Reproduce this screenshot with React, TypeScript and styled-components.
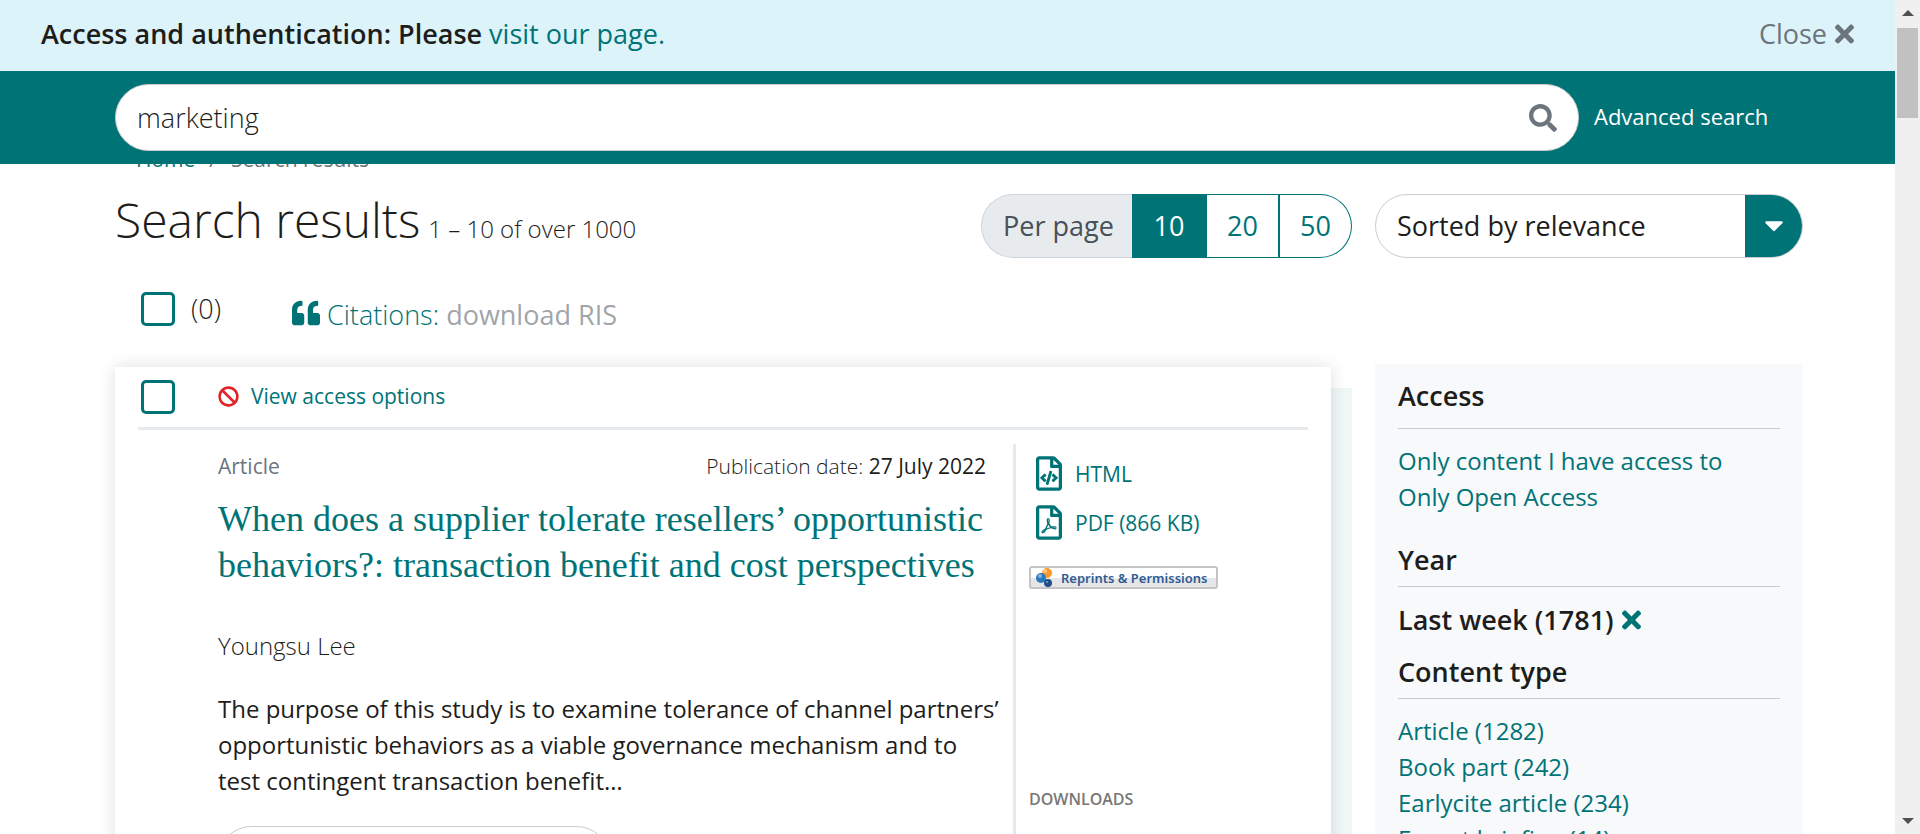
import React from "react";
import styled, { createGlobalStyle, css } from "styled-components";
import {
  FaBan,
  FaCaretDown,
  FaQuoteLeft,
  FaRegFileCode,
  FaRegFilePdf,
  FaSearch,
  FaTimes,
} from "react-icons/fa";

const teal = "#007377";
const ink = "#1d1d1b";
const muted = "#6c757d";
const line = "#e7eaed";

const GlobalStyle = createGlobalStyle`
  * { box-sizing: border-box; }
  body {
    margin: 0;
    background: #fff;
    color: ${ink};
    font: 400 24px/36px "Open Sans", sans-serif;
  }
  h1, h2, h3, p, ul { margin: 0; padding: 0; font-weight: 400; }
  ul { list-style: none; }
  a { color: ${teal}; text-decoration: none; }
  button, input, select { font: inherit; color: inherit; margin: 0; padding: 0; border: 0; background: none; }
  svg { display: block; flex: none; }
`;

const Window = styled.div`
  display: flex;
  height: 100vh;
  overflow: hidden;
`;

const Page = styled.div`
  flex: 1;
  min-width: 0;
`;

const Notice = styled.div`
  display: flex;
  align-items: center;
  justify-content: space-between;
  height: 71px;
  padding: 0 41px 3px;
  background: #dcf3f9;
  font-size: 27px;
`;

const NoticeText = styled.p`
  font-weight: 600;
  a { font-weight: 400; }
`;

const CloseButton = styled.button`
  display: flex;
  align-items: center;
  gap: 8px;
  color: ${muted};
`;

const CrossIcon = styled(FaTimes)`
  width: 19px;
  height: 28px;
`;

const SearchHeader = styled.header`
  display: flex;
  align-items: center;
  gap: 15px;
  height: 93px;
  padding: 0 93px 0 115px;
  background: ${teal};
`;

const SearchForm = styled.form`
  display: flex;
  flex: 1;
  height: 67px;
  padding: 0 21px;
  border: 1px solid #ccc;
  border-radius: 34px;
  background: #fff;
`;

const SearchInput = styled.input`
  flex: 1;
  min-width: 0;
  outline: 0;
  font-size: 27px;
  font-weight: 300;
`;

const SearchButton = styled.button`
  color: ${muted};
  font-size: 28px;
`;

const AdvancedLink = styled.a`
  flex: 0 0 208px;
  padding-bottom: 3px;
  color: #fff;
  font-size: 22px;
`;

const Content = styled.main`
  padding: 0 92px 0 115px;
`;

const Breadcrumb = styled.nav`
  display: flex;
  align-items: flex-end;
  gap: 14px;
  height: 9px;
  padding-left: 21px;
  overflow: hidden;
  color: ${muted};
  font-size: 21px;
  line-height: 28px;
`;

const TitleRow = styled.div`
  display: flex;
  align-items: flex-start;
  padding-top: 21px;
`;

const PageTitle = styled.h1`
  flex: 1;
  font-size: 48px;
  font-weight: 300;
  line-height: 52px;
  small { font-size: 24px; margin-left: 8px; }
`;

const PerPage = styled.div`
  display: flex;
  height: 64px;
  margin-right: 23px;
  font-size: 27px;
`;

const PerPageLabel = styled.span`
  display: flex;
  align-items: center;
  width: 151px;
  padding-left: 21px;
  border: 1px solid #ced4da;
  border-right: 0;
  border-radius: 32px 0 0 32px;
  background: #e7ebee;
  color: #495057;
`;

const PerPageOption = styled.button<{ $active?: boolean }>`
  width: 74px;
  margin-right: -1px;
  border: 1px solid ${teal};
  color: ${teal};
  & + & { border-left-width: 2px; }
  &:last-child { margin-right: 0; border-radius: 0 32px 32px 0; }
  ${(p) => p.$active && css`background: ${teal}; color: #fff;`}
`;

const SortBox = styled.div`
  display: flex;
  flex: 0 0 428px;
  height: 64px;
  border: 1px solid #ccc;
  border-radius: 32px;
  overflow: hidden;
  font-size: 27px;
`;

const SortSelect = styled.select`
  flex: 1;
  appearance: none;
  padding-left: 21px;
  outline: 0;
`;

const SortArrow = styled.span`
  display: flex;
  align-items: center;
  justify-content: center;
  width: 57px;
  padding-bottom: 2px;
  background: ${teal};
  color: #fff;
  pointer-events: none;
  font-size: 30px;
`;

const SelectRow = styled.div`
  display: flex;
  align-items: flex-start;
  margin-top: 34px;
  padding-left: 26px;
  font-size: 27px;
`;

const Checkbox = styled.input`
  appearance: none;
  flex: none;
  width: 34px;
  height: 34px;
  border: 3px solid ${teal};
  border-radius: 5px;
  background: #fff;
`;

const SelectAll = styled.label`
  display: flex;
  align-items: center;
  gap: 16px;
  width: 151px;
  font-weight: 300;
  line-height: 34px;
`;

const Citations = styled.p`
  display: flex;
  align-items: center;
  gap: 7px;
  color: ${teal};
  font-weight: 300;
  line-height: 46px;
  button { color: #a0a5aa; font-weight: 400; }
  svg { margin-bottom: 4px; font-size: 28px; }
`;

const Columns = styled.div`
  display: grid;
  grid-template-columns: minmax(0, 1fr) 428px;
  gap: 23px;
  margin-top: 26px;
`;

const Results = styled.div`
  display: flex;
  padding-top: 3px;
`;

const Card = styled.article`
  position: relative;
  flex: 1;
  min-width: 0;
  padding: 0 23px;
  background: #fff;
  box-shadow: 0 0 16px rgba(0, 0, 0, 0.13);
`;

const CardEdge = styled.div`
  width: 21px;
  margin-top: 21px;
  background: #f0f7f7;
`;

const AccessRow = styled.div`
  display: flex;
  align-items: center;
  height: 63px;
  padding-left: 3px;
  border-bottom: 3px solid ${line};
`;

const AccessLink = styled.a`
  display: flex;
  align-items: center;
  gap: 12px;
  margin-left: 43px;
  padding-bottom: 2px;
  font-size: 21px;
  svg { color: #e0242b; font-size: 21px; }
`;

const CardBody = styled.div`
  display: flex;
  margin-top: 14px;
`;

const Summary = styled.div`
  flex: 1;
  min-width: 0;
  padding: 0 10px 0 80px;
`;

const MetaRow = styled.div`
  display: flex;
  justify-content: space-between;
  padding-right: 17px;
  color: ${muted};
  font-size: 21px;
  line-height: 44px;
`;

const PublicationDate = styled.p`
  color: ${ink};
  font-weight: 300;
  time { font-weight: 400; }
`;

const ArticleTitle = styled.h2`
  margin-top: 8px;
  font: 400 36px/46px Georgia, "Liberation Serif", serif;
`;

const Author = styled.p`
  margin-top: 40px;
  font-size: 24px;
  font-weight: 300;
`;

const Abstract = styled.p`
  margin-top: 27px;
`;

const PillButton = styled.button`
  display: block;
  width: 392px;
  height: 67px;
  margin-top: 27px;
  border: 1px solid #ccc;
  border-radius: 34px;
`;

const Formats = styled.aside`
  display: flex;
  flex-direction: column;
  align-items: flex-start;
  flex: 0 0 295px;
  padding: 5px 0 0 13px;
  border-left: 3px solid ${line};
`;

const FormatLink = styled.a`
  display: flex;
  align-items: center;
  gap: 13px;
  height: 49px;
  padding-left: 7px;
  font-size: 21px;
  svg { width: 26px; height: 35px; }
`;

const ReprintsButton = styled.button`
  display: flex;
  align-items: center;
  gap: 8px;
  width: 189px;
  height: 23px;
  margin-top: 19px;
  padding-left: 5px;
  border: 2px solid #c4c3c5;
  border-radius: 3px;
  background: linear-gradient(#fff 50%, #e6e5e7 50%);
  color: #2d5c93;
  font: 600 13px/18px "Noto Sans", sans-serif;
  white-space: nowrap;
`;

const DownloadsLabel = styled.h3`
  margin-top: 198px;
  color: #777;
  font-size: 16px;
  font-weight: 600;
  line-height: 24px;
`;

const Filters = styled.aside`
  padding: 14px 23px 0;
  background: #f8f9fb;
`;

const FilterHeading = styled.h3<{ $lead?: boolean }>`
  padding-bottom: ${(p) => (p.$lead ? 14 : 8)}px;
  border-bottom: 1px solid #c8cbce;
  font-size: 27px;
  font-weight: 600;
`;

const FilterList = styled.ul`
  margin: 14px 0 27px;
`;

const ActiveFilter = styled.p`
  display: flex;
  align-items: center;
  gap: 8px;
  margin: 15px 0 16px;
  font-size: 27px;
  font-weight: 600;
  button { color: ${teal}; }
`;

const ScrollTrack = styled.div`
  display: flex;
  flex-direction: column;
  align-items: center;
  flex: 0 0 25px;
  padding: 10px 0;
  background: #f0f0f0;
`;

const ScrollThumb = styled.div`
  width: 21px;
  height: 90px;
  margin: 12px 0 auto;
  background: #c1c1c1;
`;

const ScrollArrow = ({ d }: { d: string }) => (
  <svg width="12" height="6" viewBox="0 0 12 6" fill="#505050">
    <path d={d} />
  </svg>
);

const ReprintsLogo = () => (
  <svg width="17" height="20" viewBox="0 0 17 20">
    <circle cx="11" cy="5" r="5" fill="#f79a2b" />
    <circle cx="9" cy="3" r="2" fill="#ffc67b" />
    <circle cx="5" cy="10" r="5" fill="#2878bd" />
    <circle cx="4" cy="8" r="2" fill="#80b7e6" />
    <circle cx="12" cy="15" r="4" fill="#234d86" />
    <circle cx="11" cy="14" r="1" fill="#7fa0cc" />
  </svg>
);

const contentTypes = [
  "Article (1282)",
  "Book part (242)",
  "Earlycite article (234)",
  "Expert briefing (14)",
];

export default function App() {
  return (
    <Window>
      <GlobalStyle />
      <Page>
        <Notice>
          <NoticeText>
            Access and authentication: Please <a href="#access">visit our page.</a>
          </NoticeText>
          <CloseButton type="button">
            Close <CrossIcon />
          </CloseButton>
        </Notice>
        <SearchHeader>
          <SearchForm role="search">
            <SearchInput aria-label="Search" defaultValue="marketing" />
            <SearchButton type="button" aria-label="Submit search">
              <FaSearch />
            </SearchButton>
          </SearchForm>
          <AdvancedLink href="#advanced">Advanced search</AdvancedLink>
        </SearchHeader>
        <Content>
          <Breadcrumb>
            <a href="#home">Home</a>
            <span>/</span>
            <span>Search results</span>
          </Breadcrumb>
          <TitleRow>
            <PageTitle>
              Search results<small>1 – 10 of over 1000</small>
            </PageTitle>
            <PerPage>
              <PerPageLabel>Per page</PerPageLabel>
              <PerPageOption $active>10</PerPageOption>
              <PerPageOption>20</PerPageOption>
              <PerPageOption>50</PerPageOption>
            </PerPage>
            <SortBox>
              <SortSelect aria-label="Sort order">
                <option>Sorted by relevance</option>
              </SortSelect>
              <SortArrow>
                <FaCaretDown />
              </SortArrow>
            </SortBox>
          </TitleRow>
          <SelectRow>
            <SelectAll>
              <Checkbox type="checkbox" />
              (0)
            </SelectAll>
            <Citations>
              <FaQuoteLeft />
              Citations: <button type="button">download RIS</button>
            </Citations>
          </SelectRow>
          <Columns>
            <Results>
              <Card>
                <AccessRow>
                  <Checkbox type="checkbox" aria-label="Select article" />
                  <AccessLink href="#options">
                    <FaBan />
                    View access options
                  </AccessLink>
                </AccessRow>
                <CardBody>
                  <Summary>
                    <MetaRow>
                      <p>Article</p>
                      <PublicationDate>
                        Publication date: <time>27 July 2022</time>
                      </PublicationDate>
                    </MetaRow>
                    <ArticleTitle>
                      <a href="#article">
                        When does a supplier tolerate resellers’ opportunistic
                        behaviors?: transaction benefit and cost perspectives
                      </a>
                    </ArticleTitle>
                    <Author>Youngsu Lee</Author>
                    <Abstract>
                      The purpose of this study is to examine tolerance of channel partners’
                      opportunistic behaviors as a viable governance mechanism and to test
                      contingent transaction benefit…
                    </Abstract>
                    <PillButton type="button" aria-label="Show abstract" />
                  </Summary>
                  <Formats>
                    <FormatLink href="#html">
                      <FaRegFileCode />
                      HTML
                    </FormatLink>
                    <FormatLink href="#pdf">
                      <FaRegFilePdf />
                      PDF (866 KB)
                    </FormatLink>
                    <ReprintsButton type="button">
                      <ReprintsLogo />
                      Reprints &amp; Permissions
                    </ReprintsButton>
                    <DownloadsLabel>DOWNLOADS</DownloadsLabel>
                  </Formats>
                </CardBody>
              </Card>
              <CardEdge />
            </Results>
            <Filters>
              <FilterHeading $lead>Access</FilterHeading>
              <FilterList>
                <li><a href="#mine">Only content I have access to</a></li>
                <li><a href="#open">Only Open Access</a></li>
              </FilterList>
              <FilterHeading>Year</FilterHeading>
              <ActiveFilter>
                Last week (1781)
                <button type="button" aria-label="Remove filter">
                  <CrossIcon />
                </button>
              </ActiveFilter>
              <FilterHeading>Content type</FilterHeading>
              <FilterList>
                {contentTypes.map((t) => (
                  <li key={t}><a href="#type">{t}</a></li>
                ))}
              </FilterList>
            </Filters>
          </Columns>
        </Content>
      </Page>
      <ScrollTrack aria-hidden="true">
        <ScrollArrow d="M0 6L6 0L12 6Z" />
        <ScrollThumb />
        <ScrollArrow d="M0 0L6 6L12 0Z" />
      </ScrollTrack>
    </Window>
  );
}
